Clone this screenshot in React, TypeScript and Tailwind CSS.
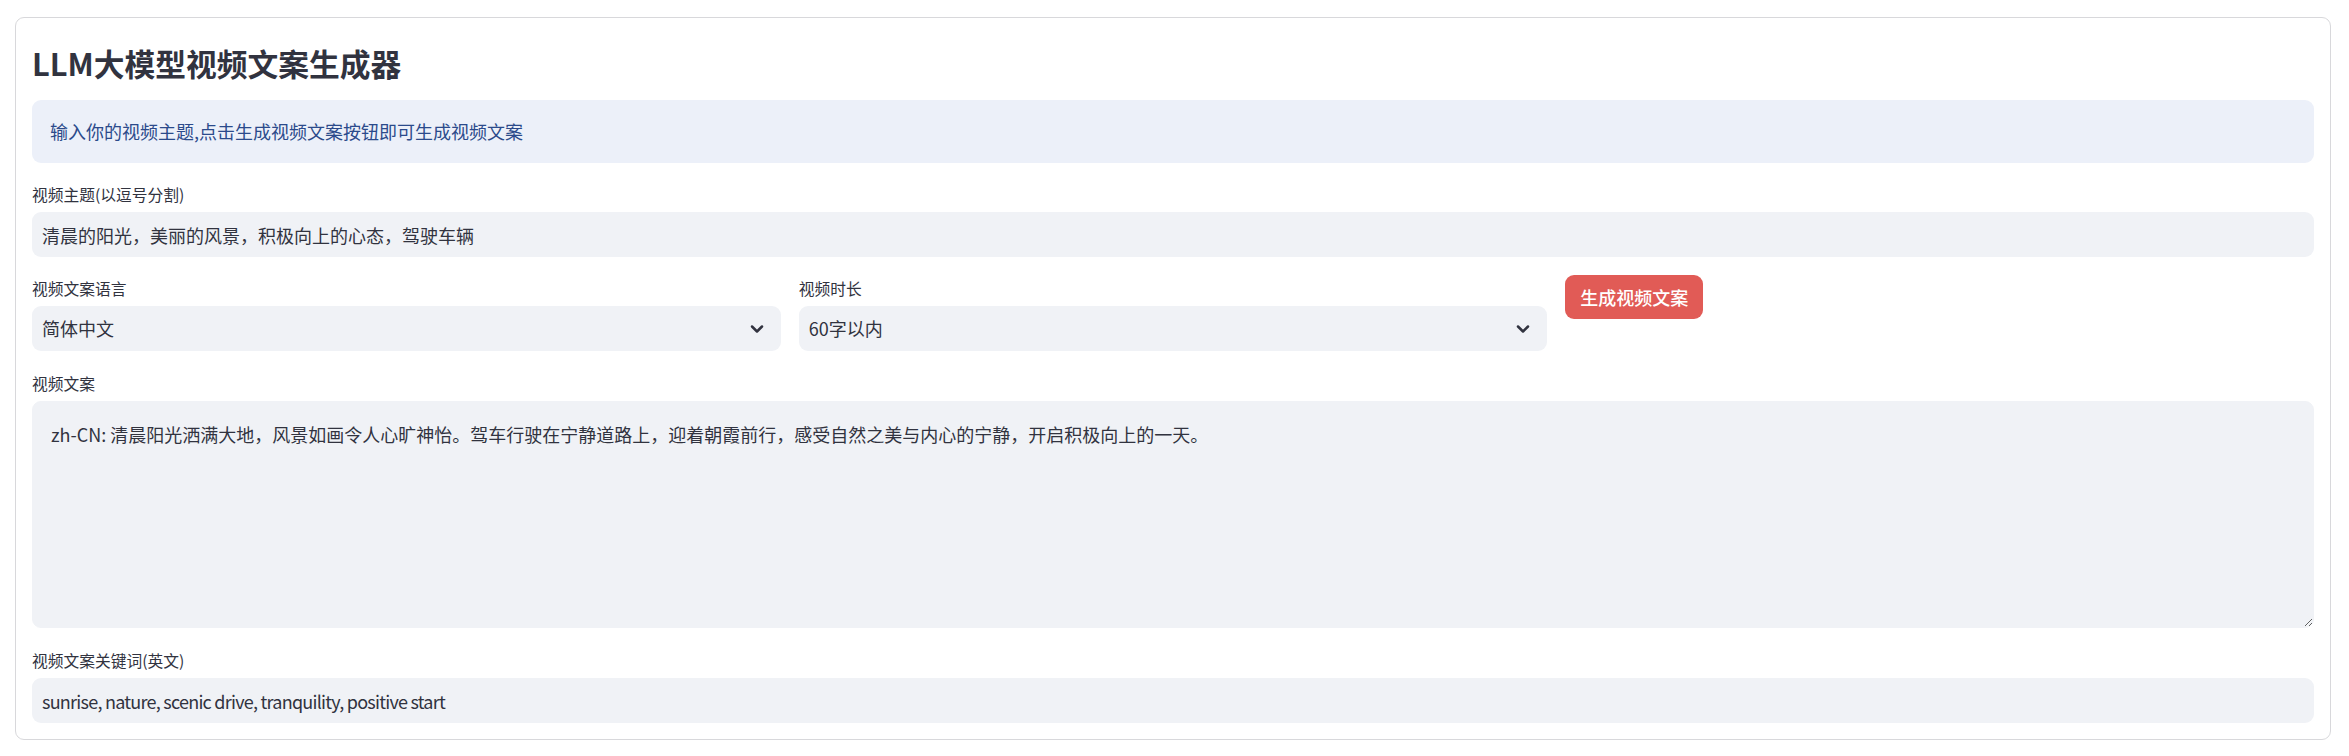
import React from 'react';

const font = "font-['Noto_Sans_CJK_SC',sans-serif]";

const Label: React.FC<{ text: string }> = ({ text }) => (
    <div className="h-[25px] mb-[5px] text-[15.75px] leading-[25px] text-[#31333f]">{text}</div>
);

const Chevron = () => (
    <svg width="20" height="20" viewBox="0 0 24 24" fill="none" stroke="#31333f" strokeWidth="3" strokeLinecap="round" strokeLinejoin="round">
        <path d="m6 9 6 6 6-6" />
    </svg>
);

const SelectBox: React.FC<{ label: string; value: string }> = ({ label, value }) => (
    <div className="flex flex-col">
        <Label text={label} />
        <div className="flex items-center justify-between h-[45px] pl-[10px] pr-[14px] bg-[#f0f2f6] rounded-[9px] text-[18px] text-[#31333f]">
            <span>{value}</span>
            <Chevron />
        </div>
    </div>
);

export default function App() {
    return (
        <div className={`${font} bg-white w-[2349px] h-[756px] pt-[17px]`}>
            <div className="ml-[15px] w-[2316px] border border-[#d8d8db] rounded-[9px] px-[16px] pt-[26px] pb-[16px] flex flex-col">
                <h3 className="h-[37px] text-[30.75px] leading-[37px] font-bold text-[#31333f]">LLM大模型视频文案生成器</h3>

                <div className="mt-[19px] h-[63px] flex items-center px-[18px] bg-[#ecf0f9] rounded-[9px] text-[18px] text-[#2b4a8b]">
                    输入你的视频主题,点击生成视频文案按钮即可生成视频文案
                </div>

                <div className="mt-[19px] flex flex-col">
                    <Label text="视频主题(以逗号分割)" />
                    <input
                        readOnly
                        defaultValue="清晨的阳光，美丽的风景，积极向上的心态，驾驶车辆"
                        className="h-[45px] px-[10px] bg-[#f0f2f6] rounded-[9px] text-[18px] text-[#31333f] outline-none"
                    />
                </div>

                <div className="mt-[19px] grid grid-cols-3 gap-[18px]">
                    <SelectBox label="视频文案语言" value="简体中文" />
                    <SelectBox label="视频时长" value="60字以内" />
                    <div className="flex items-start">
                        <button className="-mt-px h-[44px] px-[15px] rounded-[9px] bg-[#e15b56] text-white text-[18px] font-medium">生成视频文案</button>
                    </div>
                </div>

                <div className="mt-[20px] flex flex-col">
                    <Label text="视频文案" />
                    <textarea
                        readOnly
                        defaultValue="zh-CN: 清晨阳光洒满大地，风景如画令人心旷神怡。驾车行驶在宁静道路上，迎着朝霞前行，感受自然之美与内心的宁静，开启积极向上的一天。"
                        className="h-[227px] p-[18px] border border-[#f0f2f6] bg-[#f0f2f6] rounded-[9px] text-[18px] leading-[28.8px] text-[#31333f] outline-none"
                    />
                </div>

                <div className="mt-[20px] flex flex-col">
                    <Label text="视频文案关键词(英文)" />
                    <input
                        readOnly
                        defaultValue="sunrise, nature, scenic drive, tranquility, positive start"
                        className="h-[45px] px-[10px] bg-[#f0f2f6] rounded-[9px] text-[18px] tracking-[-0.75px] text-[#31333f] outline-none"
                    />
                </div>
            </div>
        </div>
    );
}
